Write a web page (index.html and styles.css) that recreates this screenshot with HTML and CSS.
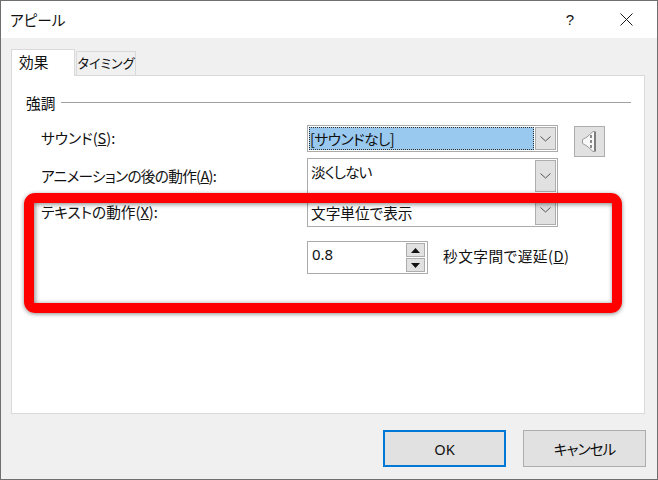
FILE: index.html
```html
<!DOCTYPE html>
<html lang="ja">
<head>
<meta charset="utf-8">
<title>アピール</title>
<link rel="stylesheet" href="styles.css">
</head>
<body>
<div class="window">
  <header class="titlebar">
    <span class="title">アピール</span>
    <span class="help">?</span>
    <svg class="close" width="13" height="13" viewBox="0 0 13 13"><path d="M0.5 0.5L12.5 12.5M12.5 0.5L0.5 12.5" stroke="#1a1a1a" stroke-width="1" fill="none"/></svg>
  </header>
  <div class="content">
    <div class="tabs">
      <div class="tab active">効果</div>
      <div class="tab">タイミング</div>
    </div>
    <main class="panel">
      <div class="group-head"><span class="group-title">強調</span><span class="group-line"></span></div>
      <div class="row row-sound">
        <label class="label label-sound">サウンド(<u>S</u>):</label>
        <div class="combo combo-sound">
          <span class="combo-text"><span class="selected">[サウンドなし]</span></span>
          <span class="combo-btn"><svg width="11" height="6" viewBox="0 0 11 6"><path d="M0.5 0.5L5.5 5L10.5 0.5" stroke="#555" fill="none"/></svg></span>
        </div>
        <button class="speaker">
          <svg class="speaker-icon" width="15" height="23" viewBox="0 0 15 23"><path d="M0.5 9.5L5 7L11 1.5H13.5V21.5H11L5 16L0.5 13.5Z" fill="#f8f8f8" stroke="#9a9a9a"/><path d="M9 5V18" stroke="#8a8a8a" stroke-width="2" stroke-dasharray="3 2"/><path d="M13 2V21" stroke="#7e7e7e" stroke-width="2"/></svg>
        </button>
      </div>
      <div class="row row-anim">
        <label class="label label-anim">アニメーションの後の動作(<u>A</u>):</label>
        <div class="combo combo-tall">
          <span class="combo-text">淡くしない</span>
          <span class="combo-btn"><svg width="11" height="6" viewBox="0 0 11 6"><path d="M0.5 0.5L5.5 5L10.5 0.5" stroke="#555" fill="none"/></svg></span>
        </div>
      </div>
      <div class="row row-text">
        <label class="label label-text">テキストの動作(<u>X</u>):</label>
        <div class="combo combo-text-mode">
          <span class="combo-text">文字単位で表示</span>
          <span class="combo-btn"><svg width="11" height="6" viewBox="0 0 11 6"><path d="M0.5 0.5L5.5 5L10.5 0.5" stroke="#555" fill="none"/></svg></span>
        </div>
      </div>
      <div class="row row-delay">
        <div class="spinner">
          <span class="spin-value">0.8</span>
          <span class="spin-btns">
            <span class="spin-btn"><svg width="9" height="5" viewBox="0 0 9 5"><path d="M4.5 0L9 5H0Z" fill="#111"/></svg></span>
            <span class="spin-btn"><svg width="9" height="5" viewBox="0 0 9 5"><path d="M0 0H9L4.5 5Z" fill="#111"/></svg></span>
          </span>
        </div>
        <label class="delay-label">秒文字間で遅延(<u>D</u>)</label>
      </div>
    </main>
    <footer class="actions">
      <button class="btn btn-default">OK</button>
      <button class="btn btn-cancel">キャンセル</button>
    </footer>
  </div>
  <div class="highlight"></div>
</div>
</body>
</html>
```
FILE: styles.css
```css
* { box-sizing: border-box; }
html, body { margin: 0; padding: 0; background: #fff; }
body { font-family: "Noto Sans CJK JP", "Noto Sans", sans-serif; font-size: 14.67px; color: #111; font-feature-settings: "palt"; }
.window { position: relative; width: 658px; height: 480px; border: 1px solid #6f6f6f; background: #f0f0f0; display: flex; flex-direction: column; overflow: hidden; }
.titlebar { height: 37px; flex: none; background: #fff; display: flex; align-items: center; padding: 0 24px 0 9px; }
.title { flex: 1; }
.help { font-family: "Liberation Sans", sans-serif; font-size: 15px; margin-right: 46px; }
.content { flex: 1; display: flex; flex-direction: column; padding: 11px 11px 12px 10px; }
.tabs { display: flex; height: 27px; flex: none; position: relative; z-index: 1; margin-bottom: -1px; }
.tab { height: 24px; margin-top: 2px; width: 60px; margin-left: 1px; background: #f0f0f0; border: 1px solid #d9d9d9; border-bottom: none; font-size: 13px; line-height: 22px; text-align: center; white-space: nowrap; }
.tab.active { width: 64px; height: 27px; margin: 0; background: #fff; font-size: 14.67px; line-height: 24px; text-align: left; padding-left: 7px; }
.panel { height: 339px; flex: none; width: 634px; background: #fff; border: 1px solid #d9d9d9; padding: 0 13px 0 14px; }
.group-head { display: flex; align-items: center; height: 20px; margin-top: 16px; }
.group-line { flex: 1; height: 1px; background: #a0a0a0; margin-left: 6px; }
.row { display: flex; align-items: flex-start; }
.label { width: 281px; padding-left: 15px; flex: none; white-space: nowrap; }
.row-sound { margin-top: 13px; height: 27px; }
.row-anim { margin-top: 6px; }
.row-text { height: 33px; }
.row-delay { margin-top: 14px; padding-left: 281px; align-items: flex-start; }
.label-sound { line-height: 26px; }
.label-anim { line-height: 36px; letter-spacing: -0.7px; }
.label-text { line-height: 35px; }
.combo { width: 251px; display: flex; background: #fff; border: 1px solid #ababab; padding: 1px; height: 27px; flex: none; }
.combo-tall { height: 36px; }
.combo-text-mode { height: 34px; margin-top: -1px; }
.combo-text { flex: 1; padding-left: 2px; line-height: 24px; white-space: nowrap; }
.combo-tall .combo-text { padding-left: 2px; letter-spacing: -1px; }
.combo-text-mode .combo-text { line-height: 35px; padding-left: 2px; }
.combo-sound .combo-text { border: 1px dotted #333; padding: 0; background: #99c9ef; margin-right: 1px; line-height: 22px; letter-spacing: -0.5px; }
.combo-btn { width: 21px; flex: none; background: #e1e1e1; border: 1px solid #adadad; display: flex; align-items: center; justify-content: center; }
.speaker { width: 31px; height: 31px; margin: 1px 0 0 16px; padding: 0; background: #e1e1e1; border: 1px solid #adadad; display: flex; align-items: center; justify-content: center; }
.speaker-icon { flex: none; }
.spinner { width: 121px; height: 33px; background: #fff; border: 1px solid #ababab; display: flex; padding: 1px 1px 1px 4px; }
.spin-value { flex: 1; font-family: "Noto Sans", sans-serif; font-size: 15px; line-height: 22px; }
.spin-btns { width: 19px; display: flex; flex-direction: column; gap: 1px; margin-right: 1px; }
.spin-btn { flex: 1; background: #e1e1e1; border: 1px solid #adadad; display: flex; align-items: center; justify-content: center; }
.delay-label { margin-left: 15px; white-space: nowrap; letter-spacing: 0.5px; line-height: 29px; }
.actions { margin-top: auto; display: flex; justify-content: flex-end; gap: 17px; }
.btn { width: 123px; height: 37px; background: #e1e1e1; border: 1px solid #adadad; font: inherit; color: #111; padding: 0; font-feature-settings: "palt"; }
.btn-default { border: 2px solid #0078d7; font-family: "Noto Sans", sans-serif; }
.btn-cancel { letter-spacing: -1px; }
.highlight { position: absolute; left: 23px; top: 192px; width: 598px; height: 120px; border: 10px solid #ff0000; border-radius: 11px; box-shadow: 0 1px 4px rgba(0,0,0,.45), inset 1px 1px 5px rgba(0,0,0,.5); }
```
